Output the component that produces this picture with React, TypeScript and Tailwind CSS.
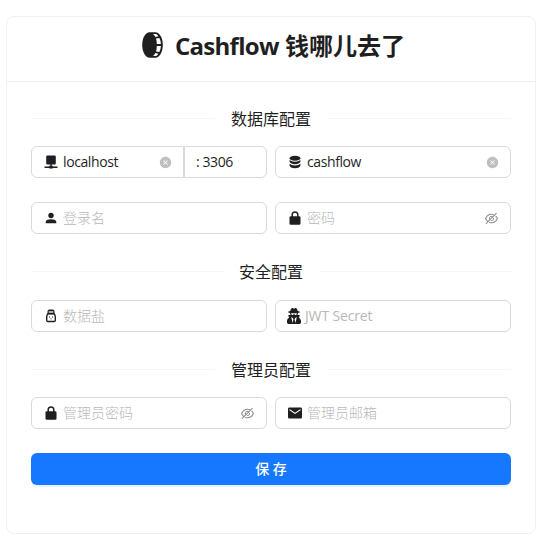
import type { ReactNode } from "react";
import { FaUserSecret } from "react-icons/fa";
import { AiFillCloseCircle, AiOutlineEyeInvisible } from "react-icons/ai";
import { IoMdMail } from "react-icons/io";

function CoinLogo() {
  return (
    <svg width="21" height="26" viewBox="0 0 21 26" className="mb-0.5 shrink-0">
      <path d="M7.500.3h6C17.500.3 20.800 6 20.800 13s-3.300 12.700-7.300 12.700h-6C3.500 25.700.2 20 .2 13S3.500.3 7.500.3Z" fill="#1f1f1f" />
      <path d="M11 2h3.300q1.300.9 2.100 2.300l-3 .6Q12.300 3 11 2ZM14 6.600l3.400-.5q1.400 2.700 1.500 6h-4.100q0-3.200-.8-5.500ZM14.800 13.900h4.100q-.1 3.300-1.500 6l-3.400-.5q.8-2.300.8-5.500ZM11 24q1.300-1 2.400-2.900l3 .6q-.8 1.400-2.100 2.300Z" fill="#fff" />
    </svg>
  );
}

function HostIcon() {
  return (
    <svg width="14" height="14" viewBox="0 0 14 14" fill="currentColor">
      <path d="M3.400.5h7.200a1.200 1.200 0 0 1 1.200 1.200v6.600a1.200 1.200 0 0 1-1.200 1.200H7.700v1.300h1.100v.7h4.700v1.500H8.800v.5H5.200V13H.5v-1.500h4.700v-.7h1.100V9.500H3.400a1.200 1.200 0 0 1-1.200-1.200V1.700A1.200 1.200 0 0 1 3.400.5Z" />
    </svg>
  );
}

function DatabaseIcon() {
  return (
    <svg width="12" height="14" viewBox="0 0 12 14" fill="currentColor">
      <ellipse cx="6" cy="3.200" rx="5.400" ry="2.500" />
      <path d="M.6 4.900Q2.300 6.700 6 6.700t5.400-1.800v1.700C11.400 8 9 9.200 6 9.200S.6 8 .6 6.600Z" />
      <path d="M.6 8.700q1.700 1.800 5.400 1.800t5.400-1.800v1.900c0 1.500-2.400 2.700-5.400 2.700S.6 12.100.6 10.600Z" />
    </svg>
  );
}

function PersonIcon() {
  return (
    <svg width="12" height="12" viewBox="0 0 12 12" fill="currentColor">
      <circle cx="6" cy="3.500" r="2.700" />
      <path d="M.7 11.300V9.700C.7 8 3.300 7.200 6 7.200s5.300.8 5.300 2.500v1.600Z" />
    </svg>
  );
}

function LockIcon() {
  return (
    <svg width="12" height="14" viewBox="0 0 12 14">
      <rect x=".5" y="5.200" width="11" height="8.600" rx="1.300" fill="currentColor" />
      <path d="M3.200 6V3.700a2.800 2.800 0 0 1 5.600 0V6" fill="none" stroke="currentColor" strokeWidth="1.500" />
    </svg>
  );
}

function SaltIcon() {
  return (
    <svg width="12" height="14" viewBox="0 0 12 14" fill="none" stroke="currentColor" strokeWidth="1.400" strokeLinejoin="round">
      <path d="M3.200 4.500V2.600q0-1.300 1.200-1.300h3.200q1.200 0 1.200 1.300v1.900Z" />
      <path d="M3.200 2.900h5.600" stroke="#777" strokeWidth="1" />
      <path d="M3 4.700h6q1.300 1.300 1.300 3.600v3q0 1.200-1.200 1.200H2.900q-1.200 0-1.200-1.200v-3Q1.700 6 3 4.700Z" />
      <path d="M4 8h1M7 8h1M5.500 9.900h1" strokeWidth="1" />
    </svg>
  );
}

function Section({ title, className }: { title: string; className: string }) {
  return (
    <div className={`flex h-6 items-center gap-4 ${className}`}>
      <div className="mb-px h-px flex-1 bg-[#f5f5f5]" />
      <h2 className="text-base leading-6 whitespace-nowrap">{title}</h2>
      <div className="mb-px h-px flex-1 bg-[#f5f5f5]" />
    </div>
  );
}

type FieldProps = {
  icon?: ReactNode;
  iconClass?: string;
  value?: string;
  placeholder?: string;
  suffix?: "clear" | "hidden";
  className?: string;
  textClass?: string;
};

function Field({
  icon,
  iconClass = "w-4 mr-1",
  value,
  placeholder,
  suffix,
  className = "flex-1 rounded-md",
  textClass = "font-light",
}: FieldProps) {
  return (
    <div className={`flex h-8 items-center border border-[#d9d9d9] bg-white px-[11px] text-sm ${className}`}>
      {icon && <span className={`flex shrink-0 justify-center ${iconClass}`}>{icon}</span>}
      <span className={`flex-1 whitespace-nowrap ${value ? "tracking-[-0.4px]" : `text-[#b8b8b8] ${textClass}`}`}>
        {value ?? placeholder}
      </span>
      {suffix === "clear" && <AiFillCloseCircle size={13} className="mt-px text-[#bfbfbf]" />}
      {suffix === "hidden" && <AiOutlineEyeInvisible size={15} className="text-[#8c8c8c]" />}
    </div>
  );
}

export default function App() {
  return (
    <main className="h-[548px] w-[544px] bg-white pt-4 pl-1.5 font-['Open_Sans','Noto_Sans_CJK_SC',sans-serif] text-[#1f1f1f]">
      <section className="h-[518px] w-[530px] rounded-lg border border-[#f0f0f0]">
        <header className="flex h-[65px] items-center justify-center gap-3 border-b border-[#f0f0f0] pb-1.5 pl-[5px]">
          <CoinLogo />
          <h1 className="text-2xl font-bold whitespace-nowrap">
            <span className="tracking-[-0.7px]">Cashflow</span> 钱哪儿去了
          </h1>
        </header>
        <div className="px-6">
          <Section title="数据库配置" className="mt-[25px]" />
          <div className="mt-[15px] flex gap-2">
            <div className="flex flex-1 basis-0">
              <Field icon={<HostIcon />} value="localhost" suffix="clear" className="w-[153px] rounded-l-md" />
              <Field value=": 3306" className="flex-1 rounded-r-md" />
            </div>
            <Field icon={<DatabaseIcon />} value="cashflow" suffix="clear" className="w-[236px] rounded-md" />
          </div>
          <div className="mt-6 flex gap-2">
            <Field icon={<PersonIcon />} placeholder="登录名" />
            <Field icon={<LockIcon />} placeholder="密码" suffix="hidden" />
          </div>
          <Section title="安全配置" className="mt-[26px]" />
          <div className="mt-4 flex gap-2">
            <Field icon={<SaltIcon />} placeholder="数据盐" />
            <Field
              icon={<FaUserSecret size={16} />}
              iconClass="w-[14px] mr-1"
              placeholder="JWT Secret"
              textClass="tracking-[-0.15px]"
            />
          </div>
          <Section title="管理员配置" className="mt-[26px]" />
          <div className="mt-[15px] flex gap-2">
            <Field icon={<LockIcon />} placeholder="管理员密码" suffix="hidden" />
            <Field icon={<IoMdMail size={16} />} placeholder="管理员邮箱" />
          </div>
          <button className="mt-6 flex h-8 w-full items-center justify-center rounded-md bg-[#1677ff] text-sm font-medium text-white shadow-[0_2px_0_rgba(5,145,255,0.1)]">
            保 存
          </button>
        </div>
      </section>
    </main>
  );
}
